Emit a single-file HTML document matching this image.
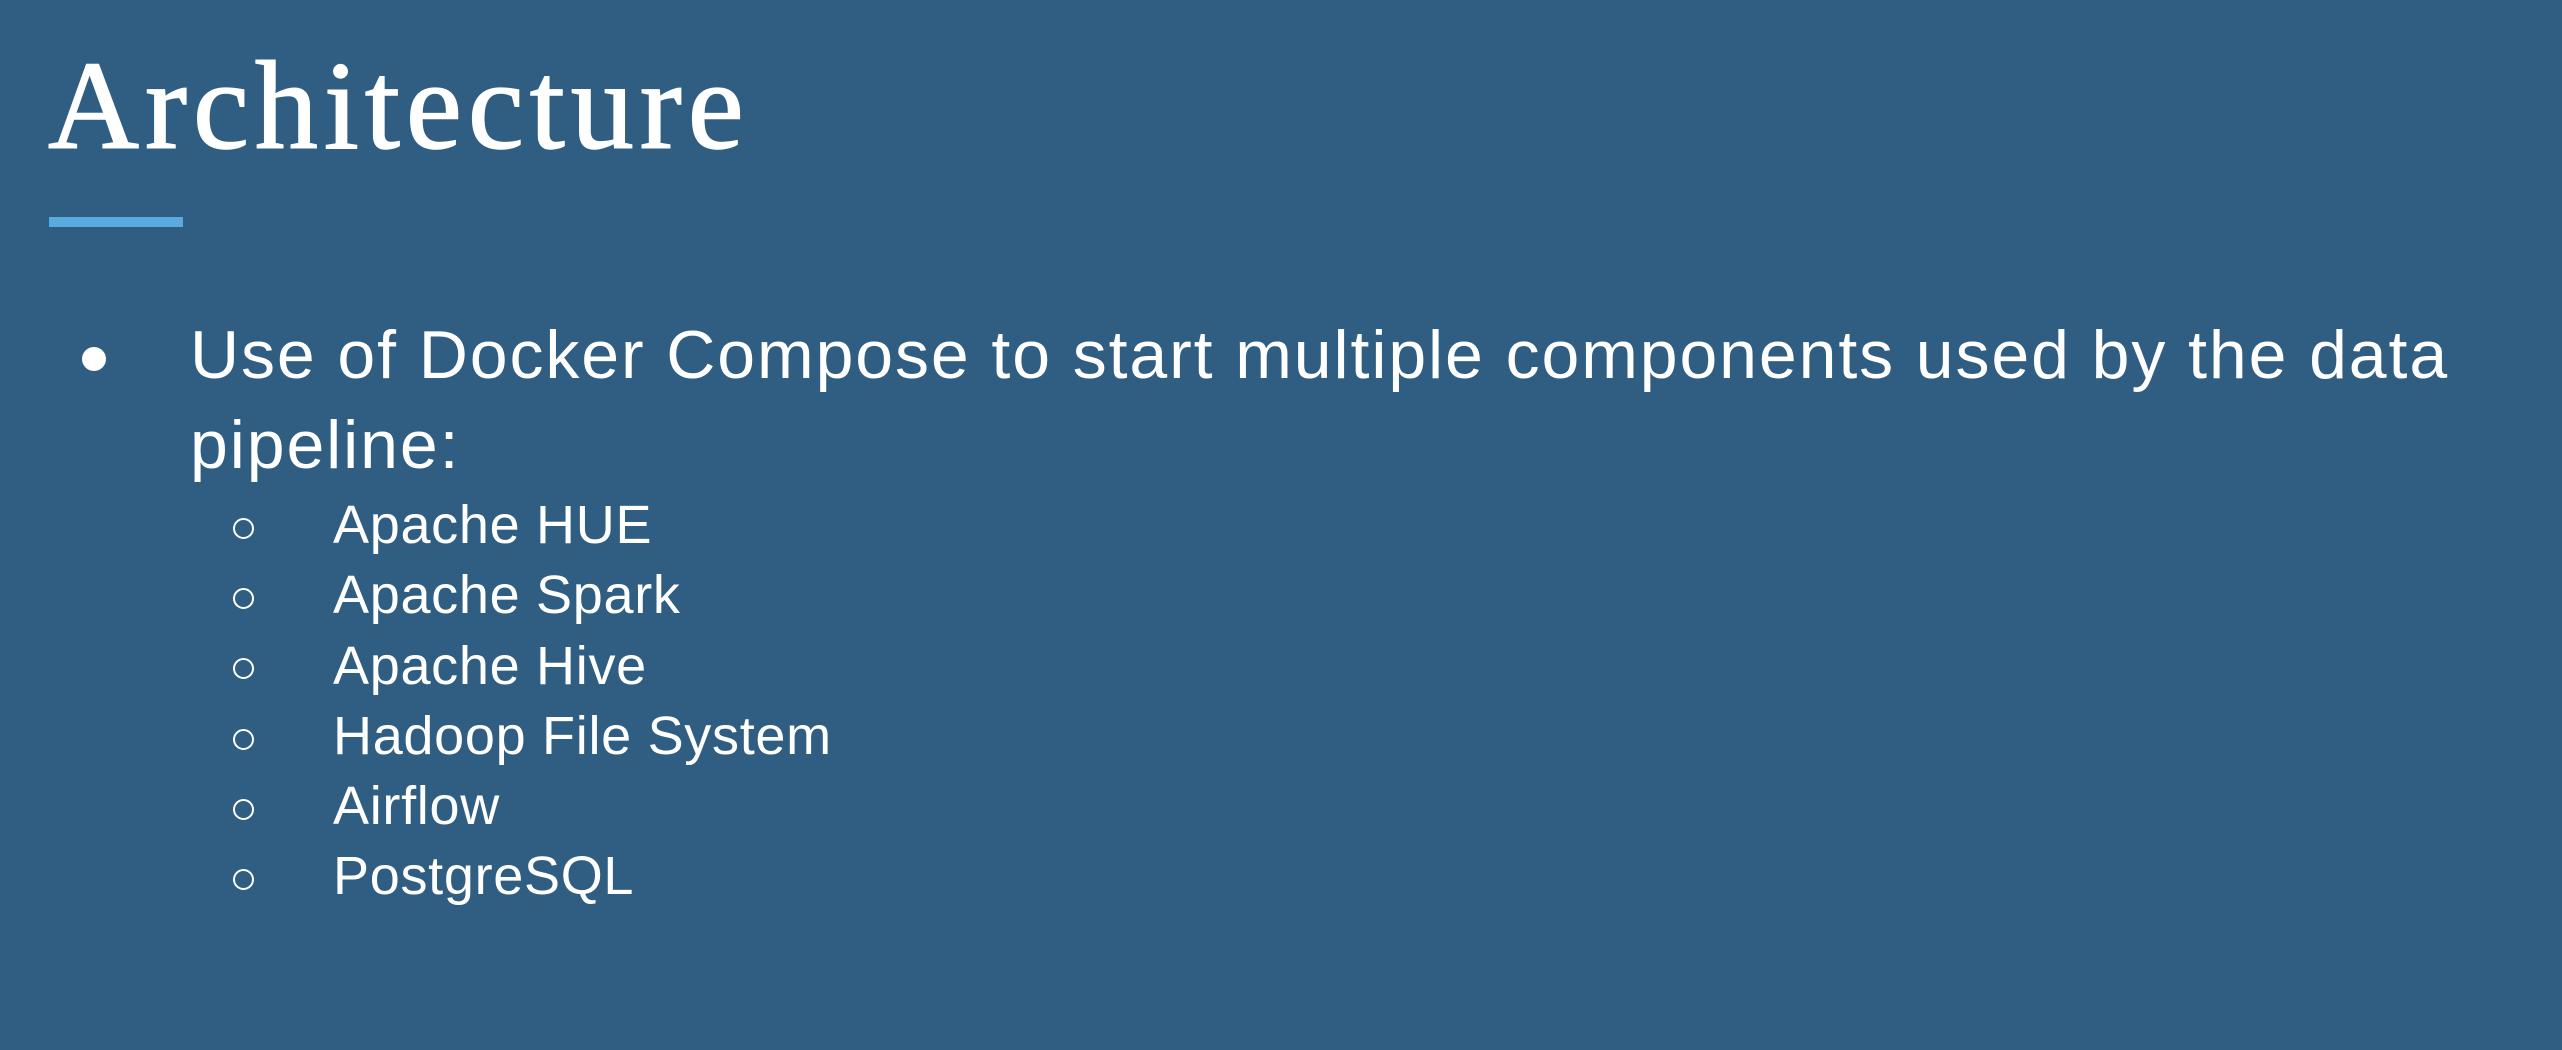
<!DOCTYPE html>
<html><head><style>
html,body{margin:0;padding:0}
body{width:2562px;height:1050px;background:#2f5e82;position:relative;overflow:hidden;color:#fff;font-family:"Liberation Sans",sans-serif}
.t{position:absolute;left:48px;top:44px;font-family:"Liberation Serif",serif;font-size:126px;line-height:1;letter-spacing:6px;white-space:nowrap;-webkit-text-stroke:1.5px #fff}
.bar{position:absolute;left:49px;top:217px;width:134px;height:10px;background:#5aa9df}
.m{position:absolute;left:190px;font-size:68px;line-height:1;letter-spacing:1.9px;white-space:nowrap}
.dot{position:absolute;left:82px;top:347px;width:24px;height:24px;border-radius:50%;background:#fff}
.s{position:absolute;left:333px;font-size:54px;line-height:1;letter-spacing:0.7px;white-space:nowrap}
.c{position:absolute;left:233px;width:17px;height:17px;border:2.5px solid #fff;border-radius:50%}
</style></head><body>
<div class="t">Architecture</div>
<div class="bar"></div>
<div class="dot"></div>
<div class="m" style="top:321px">Use of Docker Compose to start multiple components used by the data</div>
<div class="m" style="top:411px">pipeline:</div>
<div class="c" style="top:518px"></div><div class="s" style="top:498px">Apache HUE</div>
<div class="c" style="top:588px"></div><div class="s" style="top:568px">Apache Spark</div>
<div class="c" style="top:658px"></div><div class="s" style="top:639px">Apache Hive</div>
<div class="c" style="top:729px"></div><div class="s" style="top:709px">Hadoop File System</div>
<div class="c" style="top:799px"></div><div class="s" style="top:779px">Airflow</div>
<div class="c" style="top:869px"></div><div class="s" style="top:849px">PostgreSQL</div>
</body></html>
